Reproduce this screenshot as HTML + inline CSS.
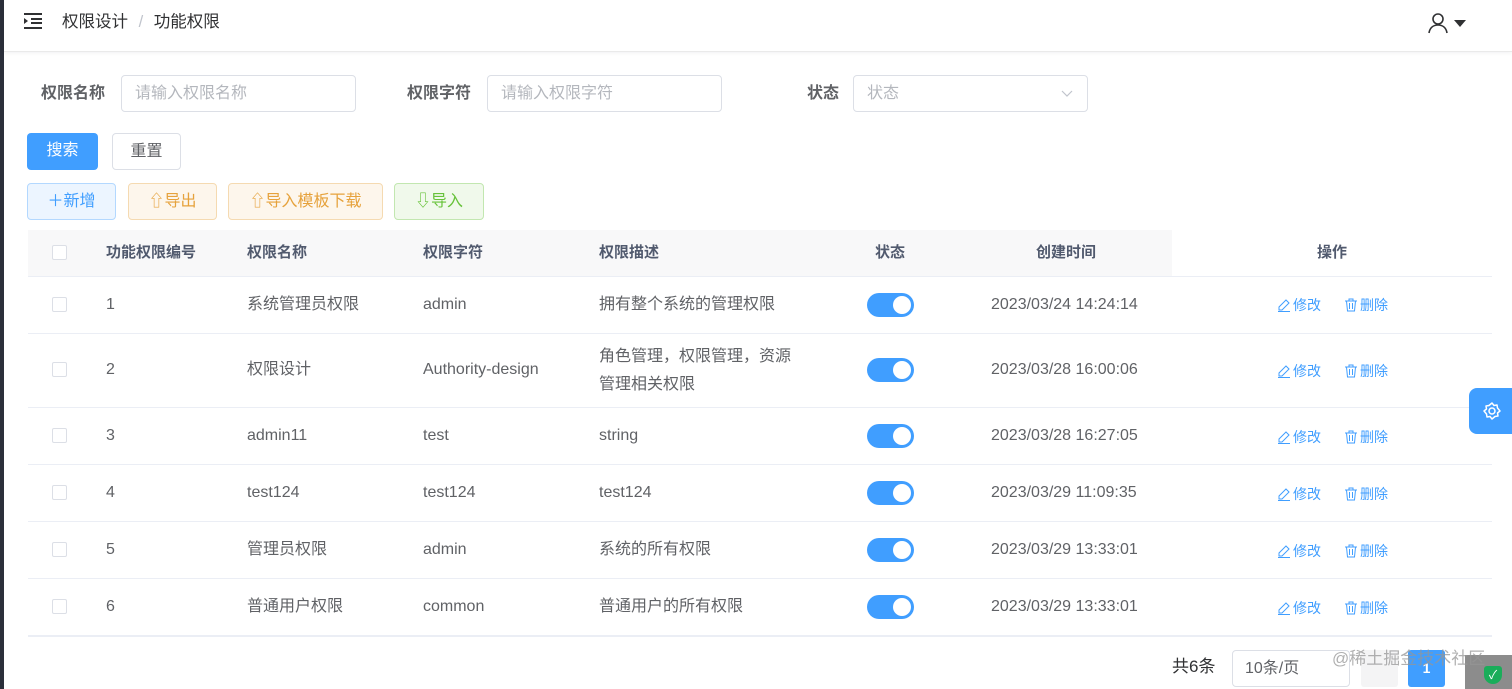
<!DOCTYPE html>
<html><head><meta charset="utf-8"><style>
*{box-sizing:border-box;margin:0;padding:0}
body{width:1512px;height:689px;overflow:hidden;background:#fff;font-family:"Liberation Sans","Noto Sans CJK SC",sans-serif;color:#606266;font-size:14px;position:relative}
.abs{position:absolute;line-height:20px}
.lbar{left:0;top:0;width:4px;height:689px;background:#2b2f3a}
.hdr{left:4px;top:0;right:0;height:52px;border-bottom:1px solid #eaeaea;box-shadow:0 1px 4px rgba(0,21,41,.06)}
.lbl{font-weight:bold;color:#606266;font-size:16px}
.inp{border:1px solid #dcdfe6;border-radius:4px;height:37px;width:235px;color:#b4b7bd;font-size:16px;padding:7px 13px}
.btn{border-radius:4px;height:37px;font-size:16px;text-align:center;line-height:35px}
.pb{height:37px;border-radius:4px;font-size:16px;line-height:35px;text-align:center}
.th{top:230px;height:46px;left:28px;width:1144px;background:#f8f8f9}
.hc{top:243px;font-weight:bold;font-size:15px;color:#515a6e}
.cb{width:15px;height:15px;border:1px solid #dcdfe6;border-radius:2px;background:#fff}
.line{left:28px;width:1464px;height:1px;background:#ebeef5}
.cell{font-size:16px;color:#606266}
.sw{width:47px;height:24px;border-radius:12px;background:#409eff}
.sw::after{content:"";position:absolute;right:3px;top:3px;width:18px;height:18px;border-radius:50%;background:#fff}
.op{font-size:14px;color:#409eff;display:flex;align-items:center;gap:2px}
</style></head><body>
<div class="abs lbar"></div>
<div class="abs hdr"></div>
<svg class="abs" style="left:23px;top:12px" width="20" height="18" viewBox="0 0 20 18"><path d="M1 2h18M8 7h11M8 11h11M1 16h18" stroke="#303133" stroke-width="2"/><path d="M1 6l4 3-4 3z" fill="#303133"/></svg>
<div class="abs" style="left:62px;top:11px;font-size:16.5px;color:#303133;line-height:22px">权限设计 <span style="color:#c0c4cc;margin:0 6px">/</span> 功能权限</div>
<svg class="abs" style="left:1428px;top:12px" width="42" height="22" viewBox="0 0 42 22"><circle cx="10" cy="7" r="5" fill="none" stroke="#303133" stroke-width="1.6"/><path d="M1 21c1-6 5-8 9-8s8 2 9 8" fill="none" stroke="#303133" stroke-width="1.6"/><path d="M26 8h12l-6 7z" fill="#303133"/></svg>

<div class="abs lbl" style="left:41px;top:84px">权限名称</div>
<div class="abs inp" style="left:121px;top:75px;line-height:21px">请输入权限名称</div>
<div class="abs lbl" style="left:407px;top:84px">权限字符</div>
<div class="abs inp" style="left:487px;top:75px;line-height:21px">请输入权限字符</div>
<div class="abs lbl" style="left:807px;top:84px">状态</div>
<div class="abs inp" style="left:853px;top:75px;line-height:21px">状态<svg style="position:absolute;right:14px;top:14px" width="12" height="8"><path d="M1 1l5 5 5-5" fill="none" stroke="#c0c4cc" stroke-width="1.2"/></svg></div>

<div class="abs btn" style="left:27px;top:133px;width:71px;background:#409eff;color:#fff;line-height:35px">搜索</div>
<div class="abs btn" style="left:112px;top:133px;width:69px;border:1px solid #dcdfe6;color:#606266;line-height:35px">重置</div>

<div class="abs pb" style="left:27px;top:183px;width:89px;background:#ecf5ff;border:1px solid #b3d8ff;color:#409eff;line-height:35px">＋新增</div>
<div class="abs pb" style="left:128px;top:183px;width:89px;background:#fdf6ec;border:1px solid #f5dab1;color:#e6a23c;line-height:35px">⇧导出</div>
<div class="abs pb" style="left:228px;top:183px;width:155px;background:#fdf6ec;border:1px solid #f5dab1;color:#e6a23c;line-height:35px">⇧导入模板下载</div>
<div class="abs pb" style="left:394px;top:183px;width:90px;background:#f0f9eb;border:1px solid #c2e7b0;color:#67c23a;line-height:35px">⇩导入</div>

<div class="abs th"></div>
<div class="abs cb" style="left:52px;top:245px"></div>
<div class="abs hc" style="left:106px">功能权限编号</div>
<div class="abs hc" style="left:247px">权限名称</div>
<div class="abs hc" style="left:423px">权限字符</div>
<div class="abs hc" style="left:599px">权限描述</div>
<div class="abs hc" style="left:875px">状态</div>
<div class="abs hc" style="left:1036px">创建时间</div>
<div class="abs hc" style="left:1317px">操作</div>
<div class="abs line" style="top:276px"></div>

<svg width="0" height="0" style="position:absolute"><defs>
<symbol id="ed" viewBox="0 0 14 14"><path d="M9 2l3 3-7 7H2V9z M1 13.5h12" fill="none" stroke="#409eff" stroke-width="1"/></symbol>
<symbol id="dl" viewBox="0 0 14 14"><path d="M1 3h12M5 3V1h4v2M2.5 3l1 10h7l1-10M5.5 5v6M8.5 5v6" fill="none" stroke="#409eff" stroke-width="1"/></symbol>
</defs></svg>

<div class="abs cb" style="left:52px;top:297px"></div><div class="abs cell" style="left:106px;top:295px">1</div><div class="abs cell" style="left:247px;top:295px">系统管理员权限</div><div class="abs cell" style="left:423px;top:295px">admin</div><div class="abs cell" style="left:599px;top:295px">拥有整个系统的管理权限</div><div class="abs sw" style="left:867px;top:293px"></div><div class="abs cell" style="left:991px;top:295px">2023/03/24 14:24:14</div>
<div class="abs op" style="left:1277px;top:295px"><svg width="14" height="14"><use href="#ed"/></svg>修改</div><div class="abs op" style="left:1344px;top:295px"><svg width="14" height="14"><use href="#dl"/></svg>删除</div>
<div class="abs line" style="top:333px"></div>
<div class="abs cb" style="left:52px;top:362px"></div><div class="abs cell" style="left:106px;top:360px">2</div><div class="abs cell" style="left:247px;top:360px">权限设计</div><div class="abs cell" style="left:423px;top:360px">Authority-design</div><div class="abs cell" style="left:599px;top:343px;line-height:28px;width:200px">角色管理，权限管理，资源管理相关权限</div><div class="abs sw" style="left:867px;top:358px"></div><div class="abs cell" style="left:991px;top:360px">2023/03/28 16:00:06</div>
<div class="abs op" style="left:1277px;top:361px"><svg width="14" height="14"><use href="#ed"/></svg>修改</div><div class="abs op" style="left:1344px;top:361px"><svg width="14" height="14"><use href="#dl"/></svg>删除</div>
<div class="abs line" style="top:407px"></div>
<div class="abs cb" style="left:52px;top:428px"></div><div class="abs cell" style="left:106px;top:426px">3</div><div class="abs cell" style="left:247px;top:426px">admin11</div><div class="abs cell" style="left:423px;top:426px">test</div><div class="abs cell" style="left:599px;top:426px">string</div><div class="abs sw" style="left:867px;top:424px"></div><div class="abs cell" style="left:991px;top:426px">2023/03/28 16:27:05</div>
<div class="abs op" style="left:1277px;top:427px"><svg width="14" height="14"><use href="#ed"/></svg>修改</div><div class="abs op" style="left:1344px;top:427px"><svg width="14" height="14"><use href="#dl"/></svg>删除</div>
<div class="abs line" style="top:464px"></div>
<div class="abs cb" style="left:52px;top:485px"></div><div class="abs cell" style="left:106px;top:483px">4</div><div class="abs cell" style="left:247px;top:483px">test124</div><div class="abs cell" style="left:423px;top:483px">test124</div><div class="abs cell" style="left:599px;top:483px">test124</div><div class="abs sw" style="left:867px;top:481px"></div><div class="abs cell" style="left:991px;top:483px">2023/03/29 11:09:35</div>
<div class="abs op" style="left:1277px;top:484px"><svg width="14" height="14"><use href="#ed"/></svg>修改</div><div class="abs op" style="left:1344px;top:484px"><svg width="14" height="14"><use href="#dl"/></svg>删除</div>
<div class="abs line" style="top:521px"></div>
<div class="abs cb" style="left:52px;top:542px"></div><div class="abs cell" style="left:106px;top:540px">5</div><div class="abs cell" style="left:247px;top:540px">管理员权限</div><div class="abs cell" style="left:423px;top:540px">admin</div><div class="abs cell" style="left:599px;top:540px">系统的所有权限</div><div class="abs sw" style="left:867px;top:538px"></div><div class="abs cell" style="left:991px;top:540px">2023/03/29 13:33:01</div>
<div class="abs op" style="left:1277px;top:541px"><svg width="14" height="14"><use href="#ed"/></svg>修改</div><div class="abs op" style="left:1344px;top:541px"><svg width="14" height="14"><use href="#dl"/></svg>删除</div>
<div class="abs line" style="top:578px"></div>
<div class="abs cb" style="left:52px;top:599px"></div><div class="abs cell" style="left:106px;top:597px">6</div><div class="abs cell" style="left:247px;top:597px">普通用户权限</div><div class="abs cell" style="left:423px;top:597px">common</div><div class="abs cell" style="left:599px;top:597px">普通用户的所有权限</div><div class="abs sw" style="left:867px;top:595px"></div><div class="abs cell" style="left:991px;top:597px">2023/03/29 13:33:01</div>
<div class="abs op" style="left:1277px;top:598px"><svg width="14" height="14"><use href="#ed"/></svg>修改</div><div class="abs op" style="left:1344px;top:598px"><svg width="14" height="14"><use href="#dl"/></svg>删除</div>
<div class="abs line" style="top:635px;height:2px"></div>

<div class="abs" style="left:1469px;top:388px;width:43px;height:46px;background:#409eff;border-radius:8px 0 0 8px"></div>
<svg class="abs" style="left:1482px;top:401px" width="20" height="20" viewBox="0 0 20 20"><circle cx="10" cy="10" r="3" fill="none" stroke="#fff" stroke-width="1.5"/><path d="M10 2l2 2.5 3-.5.5 3L18 10l-2.5 2 .5 3-3 .5L10 18l-2-2.5-3 .5-.5-3L2 10l2.5-2-.5-3 3-.5z" fill="none" stroke="#fff" stroke-width="1.5" stroke-linejoin="round"/></svg>

<div class="abs" style="left:1172px;top:657px;font-size:17px;color:#303133">共6条</div>
<div class="abs" style="left:1232px;top:650px;width:118px;height:37px;border:1px solid #dcdfe6;border-radius:4px;font-size:16px;padding:8px 12px;color:#606266">10条/页</div>
<div class="abs" style="left:1361px;top:650px;width:37px;height:37px;background:#f4f4f5;border-radius:3px"></div>
<div class="abs" style="left:1408px;top:650px;width:37px;height:37px;background:#409eff;border-radius:3px;color:#fff;text-align:center;line-height:37px;font-weight:bold">1</div>
<div class="abs" style="left:1465px;top:655px;width:47px;height:34px;background:#8c8c8c"></div>
<div class="abs" style="left:1484px;top:666px;width:18px;height:18px;background:#1aad5a;border-radius:3px 3px 9px 9px;color:#fff;font-size:12px;text-align:center;line-height:18px">✓</div>
<div class="abs" style="left:1332px;top:649px;font-size:17px;color:rgba(150,150,150,.75)">@稀土掘金技术社区</div>
</body></html>
